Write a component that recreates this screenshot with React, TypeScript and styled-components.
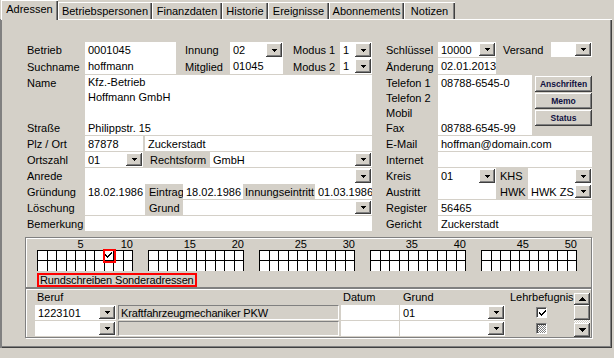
import React from "react";
import styled, { createGlobalStyle, css } from "styled-components";

const FACE = "#d4d0c8";

const GlobalStyle = createGlobalStyle`
  html, body { margin: 0; padding: 0; background: ${FACE}; overflow: hidden; }
  body { font-family: "Liberation Sans", Arial, sans-serif; font-size: 11px; color: #000; }
  * { box-sizing: border-box; }
`;

const raised = css`
  box-shadow: inset -1px -1px #404040, inset 1px 1px #fff, inset -2px -2px #808080;
`;

type Place = { $c: string; $r: string };
const place = css<Place>`
  grid-column: ${(p) => p.$c};
  grid-row: ${(p) => p.$r};
`;

const Window = styled.div`
  width: 614px;
  height: 358px;
  background: ${FACE};
`;

const TabStrip = styled.div`
  display: flex;
  align-items: flex-end;
  height: 19px;
  padding-left: 1px;
  position: relative;
  z-index: 1;
`;

const Tab = styled.div<{ $w: number; $active?: boolean }>`
  width: ${(p) => p.$w}px;
  height: ${(p) => (p.$active ? 20 : 17)}px;
  margin-bottom: ${(p) => (p.$active ? -1 : 0)}px;
  padding-bottom: ${(p) => (p.$active ? 2 : 0)}px;
  display: flex;
  align-items: center;
  justify-content: center;
  background: ${FACE};
  box-shadow: inset 1px 1px #fff, inset -1px 0 #404040, inset -2px 0 #808080;
  white-space: nowrap;
`;

const Page = styled.div`
  width: 612px;
  height: 329px;
  padding-top: 23px;
  box-shadow: inset 2px 0 #808080, inset 0 1px #fff, inset -1px -1px #404040,
    inset -2px -2px #808080;
  display: flex;
  flex-direction: column;
`;

const FormArea = styled.div`
  display: flex;
  gap: 14px;
  padding-left: 27px;
`;

const ROWS = "16px 17px 15px 15px 15px 16px 16px 16px 16px 16px 16px 16px";

const LeftGrid = styled.div`
  display: grid;
  grid-template-columns: 58px 58px 2px 31px 7px 27px 20px 13px 40px 32px 25px 32px;
  grid-template-rows: ${ROWS};
`;

const RightGrid = styled.div`
  display: grid;
  grid-template-columns: 52px 58px 32px 4px 3px 16px 41px;
  grid-template-rows: ${ROWS};
`;

const Label = styled.div<Place & { $pl?: number }>`
  ${place};
  display: flex;
  align-items: center;
  padding-left: ${(p) => p.$pl ?? 0}px;
  white-space: nowrap;
`;

const Field = styled.div<Place & { $join?: boolean }>`
  ${place};
  background: #fff;
  margin-bottom: ${(p) => (p.$join ? 0 : 1)}px;
  padding-left: 3px;
  display: flex;
  align-items: center;
  white-space: nowrap;
  overflow: hidden;
  min-width: 0;
`;

const MultiField = styled.div<Place & { $join?: boolean; $lh: number }>`
  ${place};
  background: #fff;
  margin-bottom: ${(p) => (p.$join ? 0 : 1)}px;
  padding-left: 3px;
  line-height: ${(p) => p.$lh}px;
  white-space: nowrap;
  overflow: hidden;
`;

const DescField = styled.div<Place>`
  ${place};
  background: ${FACE};
  margin-bottom: 1px;
  padding-left: 2px;
  border: 1px solid;
  border-color: #808080 #fff #fff #808080;
  display: flex;
  align-items: center;
  white-space: nowrap;
  overflow: hidden;
  letter-spacing: -0.15px;
`;

const ComboBox = styled.div<Place & { $join?: boolean }>`
  ${place};
  background: #fff;
  margin-bottom: ${(p) => (p.$join ? 0 : 1)}px;
  padding-left: 3px;
  display: flex;
  align-items: center;
  min-width: 0;
  overflow: hidden;
`;

const ComboText = styled.span`
  flex: 1;
  white-space: nowrap;
  overflow: hidden;
`;

const DropBtn = styled.span`
  flex: none;
  width: 16px;
  align-self: stretch;
  margin: 1px 1px 1px 0;
  display: flex;
  align-items: center;
  justify-content: center;
  background: ${FACE};
  ${raised};
`;

const Arrow = ({ up, big }: { up?: boolean; big?: boolean }) =>
  big ? (
    <svg width="7" height="4" viewBox="0 0 7 4" shapeRendering="crispEdges">
      <path
        d={up ? "M3 0h1v1h1v1h1v1h1v1H0V3h1V2h1V1h1z" : "M0 0h7v1H6v1H5v1H4v1H3V3H2V2H1V1H0z"}
        fill="#000"
      />
    </svg>
  ) : (
    <svg width="5" height="3" viewBox="0 0 5 3" shapeRendering="crispEdges">
      <path d="M0 0h5v1H4v1H3v1H2V2H1V1H0z" fill="#000" />
    </svg>
  );

function Combo({ $c, $r, value, $join }: Place & { value?: string; $join?: boolean }) {
  return (
    <ComboBox $c={$c} $r={$r} $join={$join}>
      <ComboText>{value}</ComboText>
      <DropBtn>
        <Arrow />
      </DropBtn>
    </ComboBox>
  );
}

const ButtonStack = styled.div<Place>`
  ${place};
  display: flex;
  flex-direction: column;
  gap: 1px;
  padding-top: 1px;
`;

const SideButton = styled.div`
  height: 16px;
  display: flex;
  align-items: center;
  justify-content: center;
  font-size: 8.5px;
  font-weight: bold;
  color: #101040;
  background: ${FACE};
  ${raised};
`;

const Group = styled.div<{ $h: number }>`
  margin-left: 25px;
  width: 567px;
  height: ${(p) => p.$h}px;
  border: 1px solid #808080;
  box-shadow: inset 1px 1px #fff, 1px 1px #fff;
  flex: none;
`;

const MailGroup = styled(Group)`
  margin-top: 5px;
  padding: 1px 0 0 11px;
`;

const Blocks = styled.div`
  display: grid;
  grid-template-columns: repeat(5, 96px);
  column-gap: 15px;
`;

const Block = styled.div`
  display: flex;
  flex-direction: column;
`;

const NumRow = styled.div`
  display: grid;
  grid-template-columns: repeat(10, 1fr);
  height: 11px;
  line-height: 11px;
`;

const Num = styled.span<{ $col: number }>`
  grid-column: ${(p) => p.$col};
  text-align: right;
  white-space: nowrap;
  direction: rtl;
`;

const CellGrid = styled.div`
  display: grid;
  grid-template-columns: repeat(10, 1fr);
  grid-template-rows: 10px 10px;
  border-top: 1px solid #000;
  border-left: 1px solid #000;
`;

const Cell = styled.div<{ $top?: boolean; $mark?: boolean }>`
  background: #fff;
  border-right: 1px solid #000;
  border-bottom: ${(p) => (p.$top ? "1px solid #000" : "none")};
  display: flex;
  align-items: center;
  justify-content: center;
  ${(p) =>
    p.$mark &&
    css`
      outline: 2px solid #f00;
      outline-offset: 0;
      position: relative;
      z-index: 1;
    `}
`;

const RedLabel = styled.div`
  margin-top: 2px;
  align-self: flex-start;
  display: inline-block;
  border: 2px solid #f00;
  height: 14px;
  line-height: 10px;
  padding: 0 1px;
  white-space: nowrap;
  letter-spacing: -0.15px;
`;

const BerufGroup = styled(Group)`
  padding-left: 9px;
  display: grid;
  grid-template-columns: 81px 2px 221px 2px 58px 1px 105px 69px 16px;
  grid-template-rows: 16px 16px 16px;
`;

const CheckCell = styled.div<Place>`
  ${place};
  display: flex;
  align-items: center;
  justify-content: center;
  padding-left: 4px;
  margin-bottom: 1px;
`;

const CheckBox = styled.span<{ $mixed?: boolean }>`
  width: 11px;
  height: 11px;
  border: 1px solid;
  border-color: #808080 #fff #fff #808080;
  box-shadow: inset 1px 1px #404040;
  background: ${(p) =>
    p.$mixed ? `repeating-conic-gradient(#808080 0 25%, #fff 0 50%) 0 0 / 2px 2px` : "#fff"};
  display: flex;
  align-items: center;
  justify-content: center;
  padding: 1px 0 0 1px;
`;

const ScrollBar = styled.div<Place>`
  ${place};
  align-self: end;
  height: 44px;
  display: flex;
  flex-direction: column;
`;

const ScrollBtn = styled.div<{ $h: number }>`
  height: ${(p) => p.$h}px;
  flex: none;
  display: flex;
  align-items: center;
  justify-content: center;
  background: ${FACE};
  ${raised};
`;

const ScrollTrack = styled.div`
  flex: 1;
  background: repeating-conic-gradient(#fff 0 25%, ${FACE} 0 50%) 0 0 / 2px 2px;
`;

const Check = () => (
  <svg width="7" height="7" viewBox="0 0 7 7" shapeRendering="crispEdges">
    <path d="M6 0h1v2H6v1H5v1H4v1H3v1H2V5H1V4H0V2h1v1h1v1h1V3h1V2h1V1h1z" fill="#000" />
  </svg>
);

const tabs = [
  { label: "Adressen", w: 57, active: true },
  { label: "Betriebspersonen", w: 94 },
  { label: "Finanzdaten", w: 70 },
  { label: "Historie", w: 46 },
  { label: "Ereignisse", w: 61 },
  { label: "Abonnements", w: 75 },
  { label: "Notizen", w: 51 },
];

const leftLabels: [string, string][] = [
  ["1", "Betrieb"],
  ["2", "Suchname"],
  ["3", "Name"],
  ["6", "Straße"],
  ["7", "Plz / Ort"],
  ["8", "Ortszahl"],
  ["9", "Anrede"],
  ["10", "Gründung"],
  ["11", "Löschung"],
  ["12", "Bemerkung"],
];

const rightLabels: [string, string][] = [
  ["1", "Schlüssel"],
  ["2", "Änderung"],
  ["3", "Telefon 1"],
  ["4", "Telefon 2"],
  ["5", "Mobil"],
  ["6", "Fax"],
  ["7", "E-Mail"],
  ["8", "Internet"],
  ["9", "Kreis"],
  ["10", "Austritt"],
  ["11", "Register"],
  ["12", "Gericht"],
];

export default function App() {
  return (
    <>
      <GlobalStyle />
      <Window>
        <TabStrip>
          {tabs.map((t) => (
            <Tab key={t.label} $w={t.w} $active={t.active}>
              {t.label}
            </Tab>
          ))}
        </TabStrip>
        <Page>
          <FormArea>
            <LeftGrid>
              {leftLabels.map(([r, l]) => (
                <Label key={l} $c="1" $r={r}>
                  {l}
                </Label>
              ))}
              <MultiField $c="2 / 5" $r="1 / 3" $lh={16}>
                0001045
                <br />
                hoffmann
              </MultiField>
              <Label $c="5 / 8" $r="1" $pl={9}>Innung</Label>
              <Label $c="5 / 8" $r="2" $pl={9}>Mitglied</Label>
              <Combo $c="8 / 10" $r="1" value="02" $join />
              <Field $c="8 / 10" $r="2">01045</Field>
              <Label $c="10 / 12" $r="1" $pl={10}>Modus 1</Label>
              <Label $c="10 / 12" $r="2" $pl={10}>Modus 2</Label>
              <Combo $c="12 / 13" $r="1" value="1" $join />
              <Combo $c="12 / 13" $r="2" value="1" />
              <MultiField $c="2 / 13" $r="3 / 6" $lh={15} $join>
                Kfz.-Betrieb
                <br />
                Hoffmann GmbH
              </MultiField>
              <Field $c="2 / 13" $r="6">Philippstr. 15</Field>
              <Field $c="2 / 3" $r="7">87878</Field>
              <Field $c="4 / 13" $r="7">Zuckerstadt</Field>
              <Combo $c="2 / 3" $r="8" value="01" />
              <Label $c="3 / 7" $r="8" $pl={7}>Rechtsform</Label>
              <Combo $c="7 / 13" $r="8" value="GmbH" />
              <Combo $c="2 / 13" $r="9" value="" $join />
              <Field $c="2 / 4" $r="10" $join>18.02.1986</Field>
              <Field $c="2 / 4" $r="11" />
              <Label $c="4 / 6" $r="10" $pl={4}>Eintrag</Label>
              <Label $c="4 / 6" $r="11" $pl={4}>Grund</Label>
              <Field $c="6 / 9" $r="10">18.02.1986</Field>
              <Label $c="9 / 11" $r="10" $pl={2}>Innungseintritt</Label>
              <Field $c="11 / 13" $r="10">01.03.1986</Field>
              <Combo $c="6 / 13" $r="11" value="" />
              <Field $c="2 / 13" $r="12" />
            </LeftGrid>
            <RightGrid>
              {rightLabels.map(([r, l]) => (
                <Label key={l} $c="1" $r={r}>
                  {l}
                </Label>
              ))}
              <Combo $c="2 / 3" $r="1" value="10000" />
              <Label $c="3 / 7" $r="1" $pl={7}>Versand</Label>
              <Combo $c="7 / 8" $r="1" value="" />
              <Field $c="2 / 3" $r="2">02.01.2013</Field>
              <Field $c="2 / 5" $r="3" $join>08788-6545-0</Field>
              <Field $c="2 / 5" $r="4" $join />
              <Field $c="2 / 5" $r="5" $join />
              <Field $c="2 / 5" $r="6">08788-6545-99</Field>
              <ButtonStack $c="6 / 8" $r="3 / 7">
                <SideButton>Anschriften</SideButton>
                <SideButton>Memo</SideButton>
                <SideButton>Status</SideButton>
              </ButtonStack>
              <Field $c="2 / 8" $r="7">hoffman@domain.com</Field>
              <Field $c="2 / 8" $r="8" />
              <Combo $c="2 / 3" $r="9" value="01" $join />
              <Field $c="2 / 3" $r="10" />
              <Label $c="3 / 4" $r="9" $pl={4}>KHS</Label>
              <Label $c="3 / 4" $r="10" $pl={4}>HWK</Label>
              <Combo $c="4 / 8" $r="9" value="" $join />
              <Combo $c="4 / 8" $r="10" value="HWK ZS" />
              <Field $c="2 / 8" $r="11">56465</Field>
              <Field $c="2 / 8" $r="12">Zuckerstadt</Field>
            </RightGrid>
          </FormArea>

          <MailGroup $h={51}>
            <Blocks>
              {[0, 1, 2, 3, 4].map((b) => (
                <Block key={b}>
                  <NumRow>
                    <Num $col={5}>{b * 10 + 5}</Num>
                    <Num $col={10}>{b * 10 + 10}</Num>
                  </NumRow>
                  <CellGrid>
                    {Array.from({ length: 20 }, (_, i) => {
                      const mark = b === 0 && i === 7;
                      return (
                        <Cell key={i} $top={i < 10} $mark={mark}>
                          {mark && <Check />}
                        </Cell>
                      );
                    })}
                  </CellGrid>
                </Block>
              ))}
            </Blocks>
            <RedLabel>Rundschreiben Sonderadressen</RedLabel>
          </MailGroup>

          <BerufGroup $h={50}>
            <Label $c="1" $r="1" $pl={2}>Beruf</Label>
            <Label $c="5" $r="1" $pl={2}>Datum</Label>
            <Label $c="7" $r="1" $pl={3}>Grund</Label>
            <Label $c="8" $r="1" $pl={5}>Lehrbefugnis</Label>

            <Combo $c="1" $r="2" value="1223101" />
            <DescField $c="3" $r="2">Kraftfahrzeugmechaniker PKW</DescField>
            <Field $c="5" $r="2" />
            <Combo $c="7" $r="2" value="01" />
            <CheckCell $c="8" $r="2">
              <CheckBox>
                <Check />
              </CheckBox>
            </CheckCell>

            <Combo $c="1" $r="3" value="" />
            <DescField $c="3" $r="3" />
            <Field $c="5" $r="3" />
            <Combo $c="7" $r="3" value="" />
            <CheckCell $c="8" $r="3">
              <CheckBox $mixed />
            </CheckCell>

            <ScrollBar $c="9" $r="1 / 4">
              <ScrollBtn $h={12}>
                <Arrow up big />
              </ScrollBtn>
              <ScrollBtn $h={15} />
              <ScrollTrack />
              <ScrollBtn $h={14}>
                <Arrow big />
              </ScrollBtn>
            </ScrollBar>
          </BerufGroup>
        </Page>
      </Window>
    </>
  );
}
